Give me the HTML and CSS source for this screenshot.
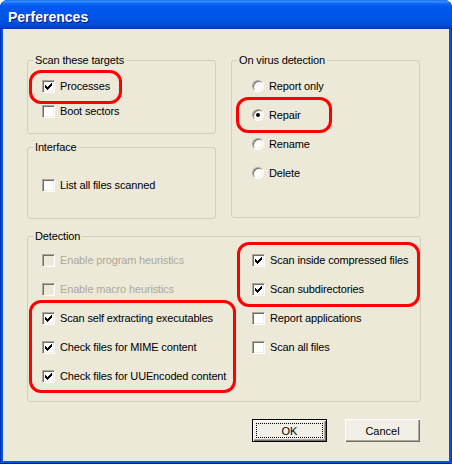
FILE: index.html
```html
<!DOCTYPE html>
<html>
<head>
<meta charset="utf-8">
<title>Perferences</title>
<link rel="stylesheet" href="styles.css">
</head>
<body>
<div class="window">
  <div class="titlebar"><span class="title">Perferences</span></div>
  <div class="client">
    <div class="top">
      <div class="col-left">
        <fieldset class="group">
          <legend>Scan these targets</legend>
          <div class="rows rows-targets">
            <div class="opt"><span class="cb"><svg class="chk" viewBox="0 0 7 7" width="7" height="7"><path d="M6 0h1v1h-1zM5 1h2v1h-2zM0 2h1v1h-1zM4 2h3v1h-3zM0 3h2v1h-2zM3 3h3v1h-3zM0 4h5v1h-5zM1 5h3v1h-3zM2 6h1v1h-1z"/></svg></span><span class="lbl">Processes</span></div>
            <div class="opt"><span class="cb"></span><span class="lbl">Boot sectors</span></div>
          </div>
        </fieldset>
        <fieldset class="group group-iface">
          <legend>Interface</legend>
          <div class="rows rows-iface">
            <div class="opt"><span class="cb"></span><span class="lbl">List all files scanned</span></div>
          </div>
        </fieldset>
      </div>
      <fieldset class="group group-virus">
        <legend>On virus detection</legend>
        <div class="rows rows-virus">
          <div class="opt radio-opt"><span class="rb"></span><span class="lbl">Report only</span></div>
          <div class="opt radio-opt"><span class="rb on"><span class="dot"></span></span><span class="lbl">Repair</span></div>
          <div class="opt radio-opt"><span class="rb"></span><span class="lbl">Rename</span></div>
          <div class="opt radio-opt"><span class="rb"></span><span class="lbl">Delete</span></div>
        </div>
      </fieldset>
    </div>
    <fieldset class="group group-detect">
      <legend>Detection</legend>
      <div class="detect-grid">
        <div class="rows rows-detect">
          <div class="opt disabled"><span class="cb"></span><span class="lbl">Enable program heuristics</span></div>
          <div class="opt disabled"><span class="cb"></span><span class="lbl">Enable macro heuristics</span></div>
          <div class="opt"><span class="cb"><svg class="chk" viewBox="0 0 7 7" width="7" height="7"><path d="M6 0h1v1h-1zM5 1h2v1h-2zM0 2h1v1h-1zM4 2h3v1h-3zM0 3h2v1h-2zM3 3h3v1h-3zM0 4h5v1h-5zM1 5h3v1h-3zM2 6h1v1h-1z"/></svg></span><span class="lbl">Scan self extracting executables</span></div>
          <div class="opt"><span class="cb"><svg class="chk" viewBox="0 0 7 7" width="7" height="7"><path d="M6 0h1v1h-1zM5 1h2v1h-2zM0 2h1v1h-1zM4 2h3v1h-3zM0 3h2v1h-2zM3 3h3v1h-3zM0 4h5v1h-5zM1 5h3v1h-3zM2 6h1v1h-1z"/></svg></span><span class="lbl">Check files for MIME content</span></div>
          <div class="opt"><span class="cb"><svg class="chk" viewBox="0 0 7 7" width="7" height="7"><path d="M6 0h1v1h-1zM5 1h2v1h-2zM0 2h1v1h-1zM4 2h3v1h-3zM0 3h2v1h-2zM3 3h3v1h-3zM0 4h5v1h-5zM1 5h3v1h-3zM2 6h1v1h-1z"/></svg></span><span class="lbl">Check files for UUEncoded content</span></div>
        </div>
        <div class="rows rows-detect">
          <div class="opt"><span class="cb"><svg class="chk" viewBox="0 0 7 7" width="7" height="7"><path d="M6 0h1v1h-1zM5 1h2v1h-2zM0 2h1v1h-1zM4 2h3v1h-3zM0 3h2v1h-2zM3 3h3v1h-3zM0 4h5v1h-5zM1 5h3v1h-3zM2 6h1v1h-1z"/></svg></span><span class="lbl">Scan inside compressed files</span></div>
          <div class="opt"><span class="cb"><svg class="chk" viewBox="0 0 7 7" width="7" height="7"><path d="M6 0h1v1h-1zM5 1h2v1h-2zM0 2h1v1h-1zM4 2h3v1h-3zM0 3h2v1h-2zM3 3h3v1h-3zM0 4h5v1h-5zM1 5h3v1h-3zM2 6h1v1h-1z"/></svg></span><span class="lbl">Scan subdirectories</span></div>
          <div class="opt"><span class="cb"></span><span class="lbl">Report applications</span></div>
          <div class="opt"><span class="cb"></span><span class="lbl">Scan all files</span></div>
        </div>
      </div>
    </fieldset>
    <div class="buttons">
      <button class="btn btn-default">OK</button>
      <button class="btn">Cancel</button>
    </div>
  </div>
  <div class="mark mark-processes"></div>
  <div class="mark mark-repair"></div>
  <div class="mark mark-compressed"></div>
  <div class="mark mark-self"></div>
</div>
</body>
</html>
```
FILE: styles.css
```css
html, body {
  margin: 0;
  padding: 0;
  background: #ffffff;
}

.window {
  position: relative;
  width: 452px;
  height: 464px;
  box-sizing: border-box;
  background: #0055e5;
  border-radius: 8px 8px 0 0;
  box-shadow: inset 1px 0 #0032b8, inset -1px 0 #0032b8, inset 0 -1px #001c9a;
  display: flex;
  flex-direction: column;
  font-family: "Liberation Sans", Arial, sans-serif;
  font-size: 11px;
  letter-spacing: -0.15px;
  color: #000;
}

.titlebar {
  height: 29px;
  flex: none;
  box-sizing: border-box;
  padding: 9px 0 0 8px;
  border-radius: 8px 8px 0 0;
  background: linear-gradient(180deg,
    #0a5ae0 0px, #3d95ff 1px, #2a85ff 2px, #0a66f6 4px, #0058ee 7px,
    #0055ea 14px, #0053e4 20px, #004ed8 24px, #0046cc 27px, #0038b0 29px);
}

.title {
  display: block;
  font-family: "Liberation Sans", Arial, sans-serif;
  font-weight: bold;
  font-size: 14px;
  line-height: 16px;
  letter-spacing: 0;
  color: #ffffff;
  text-shadow: 1px 1px 0 #0a1883;
}

.client {
  flex: 1;
  margin: 0 3px 3px;
  background: #ece9d8;
  padding: 25px 0 0 24px;
  box-sizing: border-box;
}

.top {
  display: grid;
  grid-template-columns: 189px 189px;
  column-gap: 15px;
  align-items: start;
}

.col-left {
  display: flex;
  flex-direction: column;
}

.group {
  margin: 0;
  padding: 0;
  min-width: 0;
  border: 1px solid #d0d0bf;
  border-radius: 3px;
}

.group legend {
  margin-left: 5px;
  padding: 0 2px;
  line-height: 13px;
  font-size: 11px;
}

.group-iface {
  margin-top: 7px;
}

.group-detect {
  width: 394px;
  box-sizing: border-box;
  margin-top: 11px;
}

.rows {
  display: flex;
  flex-direction: column;
}

.rows-targets {
  padding: 13px 0 15px 14px;
  gap: 12px;
}

.rows-iface {
  padding: 25px 0 26px 14px;
}

.rows-virus {
  padding: 13px 0 38px 20px;
  gap: 17px;
}

.detect-grid {
  display: grid;
  grid-template-columns: 210px 1fr;
  padding: 11px 0 18px 14px;
}

.rows-detect {
  gap: 16px;
}

.opt {
  display: flex;
  align-items: center;
  gap: 5px;
  height: 13px;
  white-space: nowrap;
}

.opt .lbl {
  line-height: 13px;
}

.radio-opt {
  height: 12px;
}

.radio-opt .lbl {
  line-height: 12px;
}

.opt.disabled .lbl {
  color: #aca899;
}

.cb {
  flex: none;
  width: 13px;
  height: 13px;
  box-sizing: border-box;
  border: 1px solid;
  border-color: #aca899 #ffffff #ffffff #aca899;
  background: #ffffff;
  box-shadow: inset 1px 1px 0 #716f64, inset -1px -1px 0 #f1efe2;
  display: flex;
  align-items: flex-start;
  justify-content: flex-start;
}

.opt.disabled .cb {
  background: #ece9d8;
}

.chk {
  display: block;
  margin: 2px 0 0 2px;
  shape-rendering: crispEdges;
  fill: #000;
}

.rb {
  flex: none;
  width: 12px;
  height: 12px;
  box-sizing: border-box;
  border-radius: 50%;
  border: 1px solid;
  border-color: #aca899 #ffffff #ffffff #aca899;
  background: #ffffff;
  box-shadow: inset 1px 1px 0 #716f64, inset -1px -1px 0 #f1efe2;
  display: flex;
  align-items: center;
  justify-content: center;
}

.rb .dot {
  width: 4px;
  height: 4px;
  border-radius: 50%;
  background: #000;
}

.buttons {
  display: flex;
  justify-content: flex-end;
  gap: 18px;
  width: 394px;
  box-sizing: border-box;
  padding-right: 1px;
  margin-top: 17px;
}

.btn {
  width: 75px;
  height: 23px;
  margin: 0;
  padding: 0;
  border: none;
  background: #f2f0e6;
  box-shadow: inset 1px 1px 0 #ffffff, inset -1px -1px 0 #716f64, inset -2px -2px 0 #aca899;
  font-family: "Liberation Sans", Arial, sans-serif;
  font-size: 11px;
  color: #000;
}

.btn-default {
  border: 1px solid #000;
  outline: 1px dotted #000;
  outline-offset: -5px;
}

.mark {
  position: absolute;
  box-sizing: border-box;
  border: 3px solid #ff0000;
  border-radius: 12px;
  pointer-events: none;
}

.mark-processes {
  left: 29px;
  top: 70px;
  width: 93px;
  height: 34px;
}

.mark-repair {
  left: 236px;
  top: 97px;
  width: 96px;
  height: 36px;
}

.mark-compressed {
  left: 237px;
  top: 242px;
  width: 183px;
  height: 65px;
}

.mark-self {
  left: 29px;
  top: 300px;
  width: 207px;
  height: 93px;
}
```
